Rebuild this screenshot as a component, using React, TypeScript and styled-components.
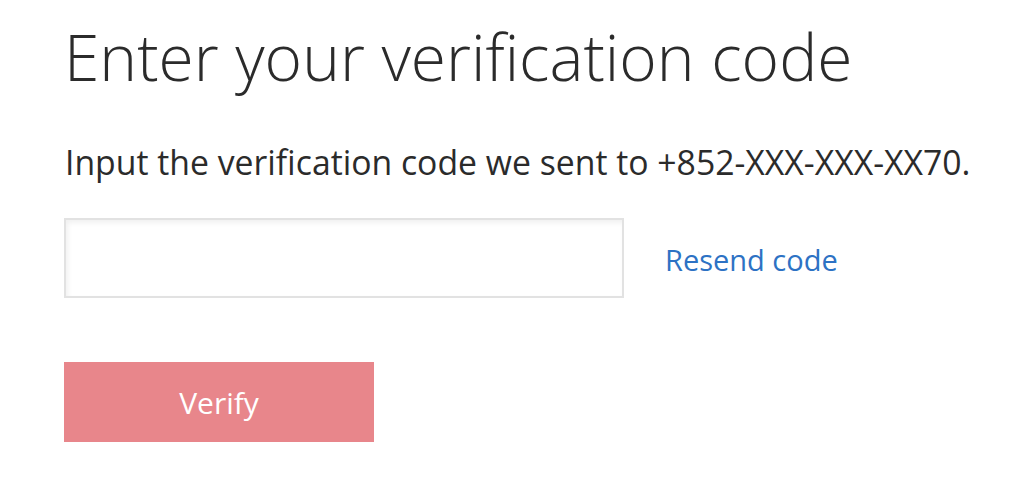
import React from "react";
import styled, { createGlobalStyle } from "styled-components";

const Global = createGlobalStyle`
  html, body { margin: 0; padding: 0; background: #ffffff; }
  body { font-family: "Open Sans", sans-serif; color: #2b2b2b; }
`;

const Page = styled.main`
  padding: 12px 0 0 64px;
  display: flex;
  flex-direction: column;
`;

const Title = styled.h1`
  margin: 0;
  font-family: "Open Sans", sans-serif;
  font-weight: 300;
  font-size: 64px;
  line-height: 90px;
  color: #2b2b2b;
`;

const Lead = styled.p`
  margin: 38px 0 0 1px;
  font-family: "Open Sans", sans-serif;
  font-weight: 400;
  font-size: 33.75px;
  line-height: 44px;
  color: #2b2b2b;
`;

const Row = styled.div`
  margin-top: 34px;
  display: flex;
  align-items: center;
  gap: 41px;
`;

const CodeInput = styled.input`
  box-sizing: border-box;
  width: 560px;
  height: 80px;
  border: 2px solid #e2e2e2;
  box-shadow: inset 2px 3px 5px rgba(0, 0, 0, 0.06);
  font-family: "Open Sans", sans-serif;
  font-size: 28px;
  padding: 0 16px;
  outline: none;
`;

const Resend = styled.a`
  font-family: "Open Sans", sans-serif;
  font-size: 29px;
  color: #2d72c4;
  text-decoration: none;
  margin-top: 3px;
`;

const VerifyButton = styled.button`
  margin-top: 64px;
  width: 310px;
  height: 80px;
  border: none;
  background: #e8868b;
  color: #ffffff;
  font-family: "Open Sans", sans-serif;
  font-size: 30px;
  cursor: pointer;
`;

export default function App() {
  return (
    <>
      <Global />
      <Page>
        <Title>Enter your verification code</Title>
        <Lead>Input the verification code we sent to +852-XXX-XXX-XX70.</Lead>
        <Row>
          <CodeInput type="text" />
          <Resend href="#">Resend code</Resend>
        </Row>
        <div>
          <VerifyButton>Verify</VerifyButton>
        </div>
      </Page>
    </>
  );
}
